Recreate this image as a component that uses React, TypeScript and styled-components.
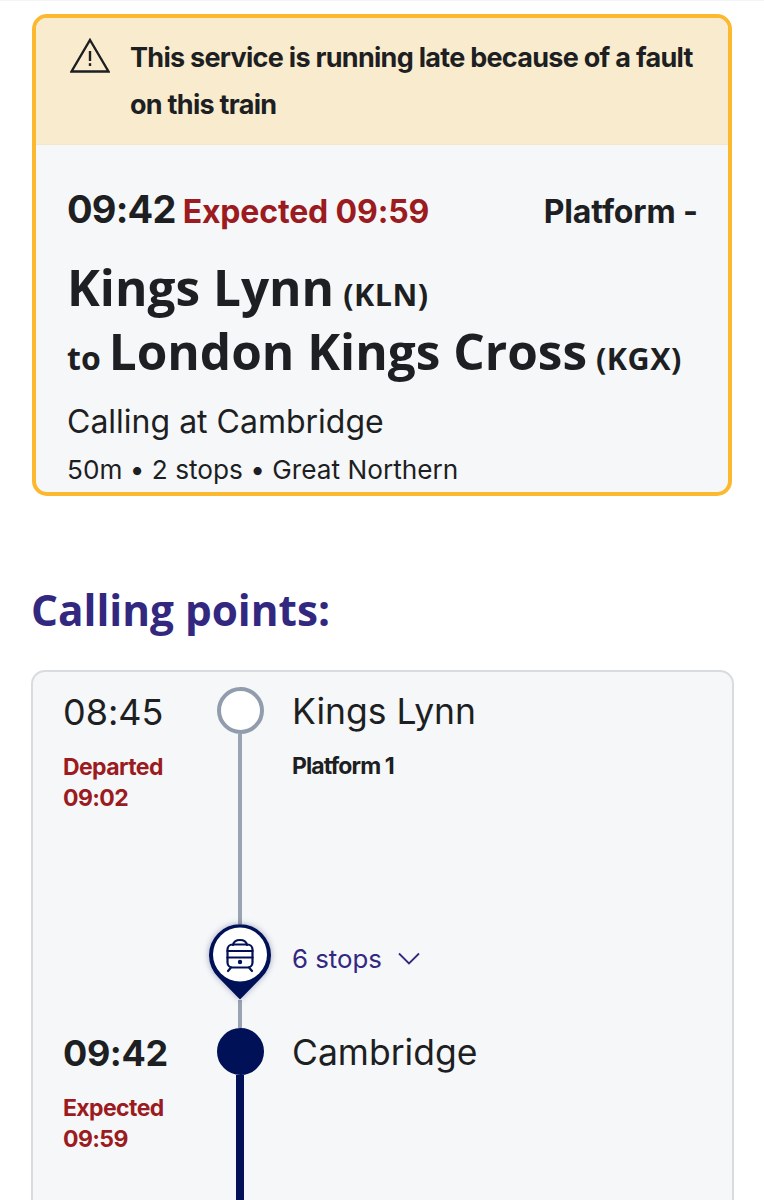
import React from "react";
import styled, { createGlobalStyle } from "styled-components";

const GlobalStyle = createGlobalStyle`
  html, body {
    margin: 0;
    padding: 0;
    background: #fff;
  }
  body {
    font-family: Inter, "Liberation Sans", sans-serif;
    font-feature-settings: "calt" 0;
    color: #1d1f22;
  }
`;

const App: React.FC = () => {
  return (
    <>
      <GlobalStyle />
      <StyledPage>
        <StyledServiceCard>
          <StyledBanner>
            <StyledWarningIcon viewBox="0 0 40 35" aria-hidden="true">
              <path d="M20 2 L38.5 33.5 H1.5 Z" fill="none" stroke="#1d1f22" strokeWidth="2.4" strokeLinejoin="miter" />
              <rect x="18.8" y="13" width="2.4" height="10" fill="#1d1f22" />
              <rect x="18.8" y="25.2" width="2.4" height="2.8" fill="#1d1f22" />
            </StyledWarningIcon>
            <StyledBannerText>
              This service is running late because of a fault on this train
            </StyledBannerText>
          </StyledBanner>
          <StyledServiceBody>
            <StyledTimeRow>
              <StyledBigTime>09:42</StyledBigTime>
              <StyledExpected>Expected 09:59</StyledExpected>
              <StyledPlatform>Platform -</StyledPlatform>
            </StyledTimeRow>
            <StyledRoute>
              <StyledRouteLine>
                <StyledStation>Kings Lynn</StyledStation>
                <StyledCode>(KLN)</StyledCode>
              </StyledRouteLine>
              <StyledRouteLine>
                <StyledTo>to</StyledTo>
                <StyledStation>London Kings Cross</StyledStation>
                <StyledCode>(KGX)</StyledCode>
              </StyledRouteLine>
            </StyledRoute>
            <StyledCalling>Calling at Cambridge</StyledCalling>
            <StyledMeta>50m • 2 stops • Great Northern</StyledMeta>
          </StyledServiceBody>
        </StyledServiceCard>

        <StyledHeading>Calling points:</StyledHeading>

        <StyledTimeline>
          <StyledStopRow $height={237}>
            <StyledTimeCol>
              <StyledStopTime>08:45</StyledStopTime>
              <StyledStatus>
                Departed
                <br />
                09:02
              </StyledStatus>
            </StyledTimeCol>
            <StyledTrack>
              <StyledDot />
              <StyledLine />
            </StyledTrack>
            <StyledStopInfo>
              <StyledStopName>Kings Lynn</StyledStopName>
              <StyledStopPlatform>Platform 1</StyledStopPlatform>
            </StyledStopInfo>
          </StyledStopRow>

          <StyledStopRow $height={104}>
            <div />
            <StyledTrack>
              <StyledPin viewBox="0 0 62 76" aria-hidden="true">
                <path d="M31 75.5 L9.5 53.5 A31 31 0 1 1 52.5 53.5 Z" fill="#001158" />
                <circle cx="31" cy="30.5" r="27" fill="#fff" />
                <g fill="none" stroke="#001158" strokeWidth="2.2" strokeLinecap="round" strokeLinejoin="round">
                  <path d="M24 21 Q25 16 31 16 Q37 16 38 21" />
                  <rect x="18.5" y="20.5" width="25" height="23" rx="5" />
                  <path d="M18.5 27 H43.5" />
                  <path d="M18.5 33.5 H43.5" />
                  <path d="M22 43.5 L19 47" />
                  <path d="M40 43.5 L43 47" />
                </g>
                <circle cx="31" cy="38" r="2.2" fill="#001158" />
              </StyledPin>
              <StyledLine />
            </StyledTrack>
            <StyledStopsToggle>
              6 stops
              <svg width="22" height="13" viewBox="0 0 22 13" aria-hidden="true">
                <path d="M1 1.5 L11 11.5 L21 1.5" fill="none" stroke="#33287f" strokeWidth="1.8" />
              </svg>
            </StyledStopsToggle>
          </StyledStopRow>

          <StyledStopRow $height={200}>
            <StyledTimeCol>
              <StyledStopTime $current>09:42</StyledStopTime>
              <StyledStatus>
                Expected
                <br />
                09:59
              </StyledStatus>
            </StyledTimeCol>
            <StyledTrack>
              <StyledDot $current />
              <StyledLine $current />
            </StyledTrack>
            <StyledStopInfo>
              <StyledStopName>Cambridge</StyledStopName>
            </StyledStopInfo>
          </StyledStopRow>
        </StyledTimeline>
      </StyledPage>
    </>
  );
};

export default App;

const StyledPage = styled.main`
  height: 1200px;
  overflow: hidden;
  box-sizing: border-box;
  border-top: 1px solid #f3f4f6;
  padding: 13px 31px 0 32px;
  display: flex;
  flex-direction: column;
`;

const StyledServiceCard = styled.section`
  box-sizing: border-box;
  width: 700px;
  height: 482px;
  flex-shrink: 0;
  border: 4px solid #fcb92f;
  border-radius: 15px;
  overflow: hidden;
  background: #f6f7f9;
`;

const StyledBanner = styled.div`
  box-sizing: border-box;
  height: 127px;
  background: #f9ebcd;
  border-bottom: 1px solid #f4e6c8;
  padding: 16px 30px 0 34px;
  display: flex;
  gap: 20px;
`;

const StyledWarningIcon = styled.svg`
  width: 40px;
  height: 35px;
  flex-shrink: 0;
  margin-top: 4px;
`;

const StyledBannerText = styled.div`
  font-size: 27px;
  font-weight: 700;
  line-height: 47px;
  letter-spacing: -0.72px;
`;

const StyledServiceBody = styled.div`
  padding: 35px 31px 0 31px;
`;

const StyledTimeRow = styled.div`
  display: flex;
  align-items: baseline;
  gap: 7px;
`;

const StyledBigTime = styled.span`
  font-size: 38px;
  font-weight: 700;
  line-height: 58px;
  letter-spacing: -0.8px;
`;

const StyledExpected = styled.span`
  font-size: 32px;
  font-weight: 700;
  letter-spacing: -0.15px;
  color: #9b1b20;
`;

const StyledPlatform = styled.span`
  margin-left: auto;
  margin-right: -1px;
  font-size: 32px;
  font-weight: 700;
  letter-spacing: -0.1px;
`;

const StyledRoute = styled.div`
  margin-top: 17px;
`;

const StyledRouteLine = styled.div`
  font-family: "Open Sans", "Noto Sans", sans-serif;
  font-weight: 700;
  height: 64px;
  line-height: 64px;
  display: flex;
  align-items: baseline;
  gap: 9px;
  white-space: nowrap;
`;

const StyledStation = styled.span`
  font-size: 49.5px;
`;

const StyledCode = styled.span`
  font-size: 30.5px;
  letter-spacing: 0.5px;
`;

const StyledTo = styled.span`
  font-size: 32px;
  margin-right: -1px;
`;

const StyledCalling = styled.div`
  margin-top: 17px;
  font-size: 32px;
  line-height: 44px;
`;

const StyledMeta = styled.div`
  margin-top: 6px;
  font-size: 26.2px;
  line-height: 40px;
  white-space: nowrap;
`;

const StyledHeading = styled.h2`
  margin: 85px 0 0 -1px;
  font-family: "Open Sans", "Noto Sans", sans-serif;
  font-size: 42.3px;
  font-weight: 700;
  line-height: 58px;
  color: #33287f;
`;

const StyledTimeline = styled.section`
  box-sizing: border-box;
  width: 703px;
  margin: 31px 0 0 -1px;
  flex-shrink: 0;
  border: 2px solid #d8dbe0;
  border-radius: 14px;
  background: #f6f7f9;
  padding: 15px 0 0 31px;
`;

const StyledStopRow = styled.div<{ $height: number }>`
  height: ${({ $height }) => $height}px;
  display: grid;
  grid-template-columns: 152px 48px 1fr;
`;

const StyledTimeCol = styled.div`
  min-width: 0;
  margin-left: -1px;
`;

const StyledStopTime = styled.div<{ $current?: boolean }>`
  font-size: 36px;
  font-weight: ${({ $current }) => ($current ? 700 : 400)};
  letter-spacing: ${({ $current }) => ($current ? "-0.4px" : "0")};
  line-height: 50px;
`;

const StyledStatus = styled.div`
  margin-top: 15px;
  font-size: 23px;
  font-weight: 700;
  line-height: 31px;
  letter-spacing: -0.6px;
  color: #9b1b20;
`;

const StyledTrack = styled.div`
  height: 100%;
  display: flex;
  flex-direction: column;
  align-items: center;
`;

const StyledDot = styled.div<{ $current?: boolean }>`
  box-sizing: border-box;
  width: 47px;
  height: 47px;
  flex-shrink: 0;
  border-radius: 50%;
  border: 4px solid ${({ $current }) => ($current ? "#001158" : "#919cac")};
  background: ${({ $current }) => ($current ? "#001158" : "#fff")};
`;

const StyledLine = styled.div<{ $current?: boolean }>`
  flex: 1;
  width: ${({ $current }) => ($current ? 8 : 4)}px;
  background: ${({ $current }) => ($current ? "#001158" : "#9aa3b1")};
`;

const StyledPin = styled.svg`
  width: 62px;
  height: 76px;
  flex-shrink: 0;
  overflow: visible;
  filter: drop-shadow(0 0 3px rgba(0, 17, 88, 0.35));
`;

const StyledStopInfo = styled.div`
  padding-left: 28px;
`;

const StyledStopName = styled.div`
  font-size: 35.5px;
  line-height: 50px;
`;

const StyledStopPlatform = styled.div`
  margin-top: 14px;
  font-size: 23px;
  font-weight: 700;
  line-height: 31px;
  letter-spacing: -0.9px;
`;

const StyledStopsToggle = styled.div`
  padding: 14px 0 0 28px;
  height: 40px;
  display: flex;
  align-items: center;
  gap: 16px;
  font-size: 25.8px;
  color: #33287f;
`;
